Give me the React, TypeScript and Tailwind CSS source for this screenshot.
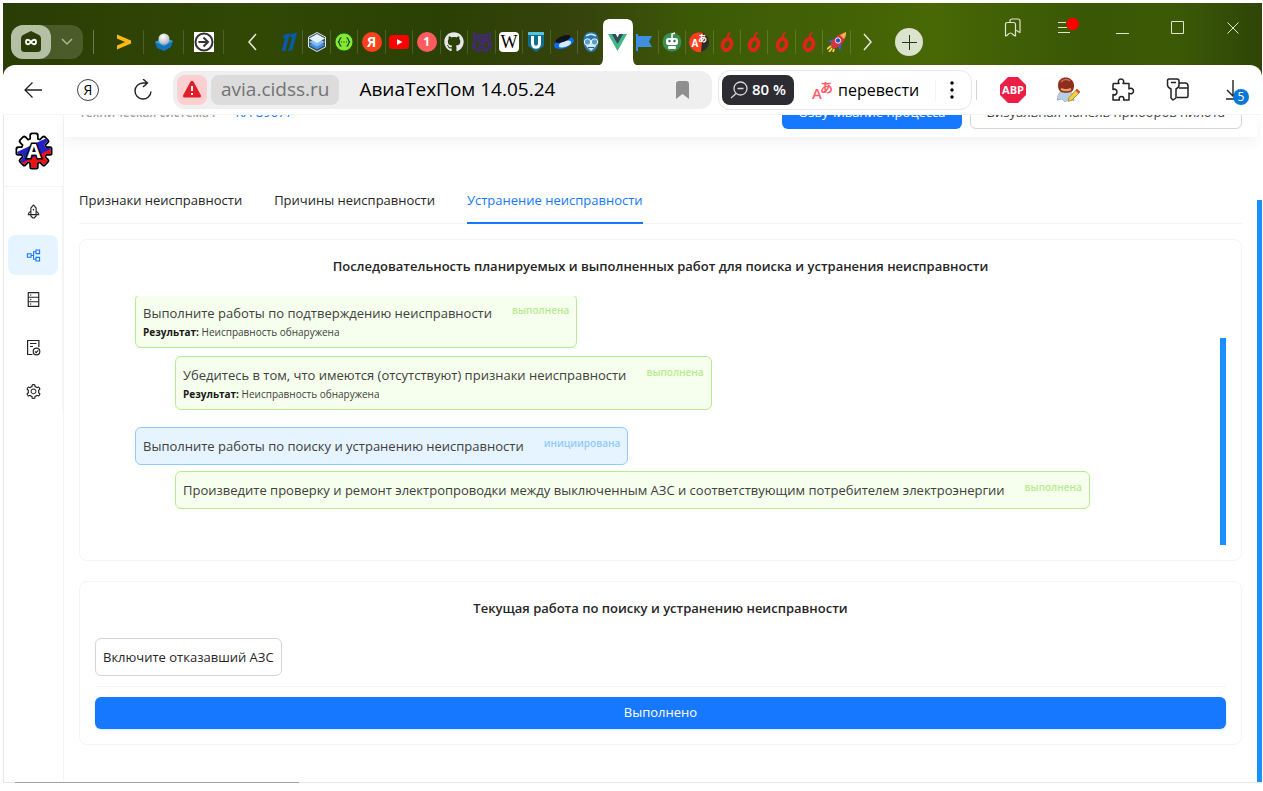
import { ReactNode } from "react";
import clsx from "clsx";
import {
  AiOutlineDatabase,
  AiOutlinePartition,
  AiOutlineRocket,
  AiOutlineSetting,
} from "react-icons/ai";
import { FaGithub } from "react-icons/fa";

/* ---------- TAB FAVICONS ---------- */

const ArrowYellow = () => (
  <svg width="16" height="18" viewBox="0 0 16 18">
    <path d="M1 1.500v4L9 9l-8 3.500v4L15 10.500v-3z" fill="#fdb813" />
  </svg>
);

const Sphere = () => (
  <svg width="20" height="20" viewBox="0 0 20 20">
    <defs>
      <radialGradient id="ball" cx=".4" cy=".3" r=".8">
        <stop offset="0" stopColor="#fff" />
        <stop offset="1" stopColor="#a9a9b5" />
      </radialGradient>
    </defs>
    <path d="M1 10l9-4 9 3-2 6-7 4-7-3z" fill="#1474b8" />
    <path d="M1 10l9-4 9 3-9 5z" fill="#3aa0d8" />
    <circle cx="10" cy="7" r="5.500" fill="url(#ball)" />
  </svg>
);

const CircleArrow = () => (
  <svg width="20" height="20" viewBox="0 0 20 20">
    <path d="M0 0h20v20H0z" fill="#fff" />
    <circle cx="10" cy="10" r="8.500" fill="none" stroke="#333" strokeWidth="2" />
    <path d="M4.500 10H14M9.500 5.500L14 10l-4.500 4.500" fill="none" stroke="#333" strokeWidth="2" />
  </svg>
);

const ChannelOne = () => (
  <svg width="16" height="20" viewBox="0 0 16 20">
    <path d="M3 3l6-2-4.500 18H.5L4 6H1.500z" fill="#0b5aa5" />
    <path d="M9.500 2L16 .5 11.500 18l-4 1L11 5H8.500z" fill="#0b5aa5" />
  </svg>
);

const Layers = () => (
  <svg width="20" height="20" viewBox="0 0 20 20">
    <path d="M10 .5l8.500 4.500v10L10 19.500 1.500 15V5z" fill="#3c4a5c" stroke="#dfe8f0" />
    <path d="M10 9l8 4-8 4.500L2 13z" fill="#3f8fe0" />
    <path d="M10 6l8 4-8 4.500L2 10z" fill="#7dbdf2" />
    <path d="M10 2l8 4.500-8 4.500-8-4.500z" fill="#e3f3fd" />
  </svg>
);

const Swagger = () => (
  <svg width="20" height="20" viewBox="0 0 20 20">
    <circle cx="10" cy="10" r="9" fill="#85ea2d" stroke="#235b20" strokeWidth="1" />
    <path
      d="M7.500 6C5 5.500 6.500 9.500 4 10c2.500.5 1 4.500 3.500 4M12.500 6c2.500-.5 1 3.500 3.500 4-2.500.5-1 4.500-3.500 4M7 10h1M9.500 10h1M12 10h1"
      fill="none"
      stroke="#173647"
      strokeWidth="1.200"
    />
  </svg>
);

const Round = ({ className, children }: { className: string; children: ReactNode }) => (
  <span
    className={clsx(
      "flex h-5 w-5 items-center justify-center rounded-full font-bold leading-5 text-white",
      className
    )}
  >
    {children}
  </span>
);

const Youtube = () => (
  <svg width="20" height="14" viewBox="0 0 20 14">
    <rect width="20" height="14" rx="3.500" fill="#f00" />
    <path d="M8 4l5.500 3L8 10z" fill="#fff" />
  </svg>
);

const Owl = () => (
  <svg width="20" height="20" viewBox="0 0 20 20" fill="none" stroke="#4b2296" strokeWidth="1.300">
    <path d="M2 1l3 2.500h10L18 1v5l-1 4v4l-2 4H5l-2-4v-4L2 6z" />
    <circle cx="6.500" cy="7" r="2.200" />
    <circle cx="13.500" cy="7" r="2.200" />
    <path d="M9 9l1 2 1-2M6 12h8M7 15h6M6 7h1M13 7h1M3 13l-2-2v5l2 1M17 13l2-2v5l-2 1M5 19h3M12 19h3" />
  </svg>
);

const ShieldU = () => (
  <svg width="16" height="20" viewBox="0 0 16 20">
    <path d="M0 0h16v14l-8 6-8-6z" fill="#106f91" />
    <path d="M0 0h16v3H0z" fill="#55c3d8" />
    <path d="M4.500 4v7.500c0 5 7 5 7 0V4" fill="none" stroke="#fff" strokeWidth="3" />
  </svg>
);

const Disk = () => (
  <svg width="20" height="14" viewBox="0 0 20 14" className="overflow-visible">
    <ellipse cx="10" cy="8" rx="10.500" ry="5" transform="rotate(-20 10 8)" fill="#0d6bf0" />
    <ellipse cx="11" cy="9" rx="6.500" ry="3" transform="rotate(-20 11 9)" fill="#cfe9ff" />
    <ellipse cx="9" cy="4" rx="8" ry="3" transform="rotate(-20 9 4)" fill="#10131c" />
  </svg>
);

const Face = () => (
  <svg width="20" height="20" viewBox="0 0 20 20">
    <path d="M10 0c5 0 7.500 3 7.500 8.500S15 20 10 20 2.500 14 2.500 8.500 5 0 10 0z" fill="#2c79ad" />
    <path d="M5 8h10v6l-5 5-5-5z" fill="#cfe6f3" />
    <path d="M5 4c3-2 7-2 10 0" stroke="#d8ecf7" strokeWidth="1.500" fill="none" />
    <circle cx="6.500" cy="10" r="3.200" fill="#5b9fc8" stroke="#eaf5fb" />
    <circle cx="13.500" cy="10" r="3.200" fill="#5b9fc8" stroke="#eaf5fb" />
    <path d="M7 15.500h6" stroke="#24618d" />
  </svg>
);

const Vue = () => (
  <svg width="19" height="17" viewBox="0 0 19 17">
    <path d="M0 0h7.500l2 3.500 2-3.500H19L9.500 17z" fill="#41b883" />
    <path d="M3.800 0h3.700l2 3.500 2-3.500h3.700L9.500 10z" fill="#35495e" />
  </svg>
);

const Flag = () => (
  <svg width="16" height="17" viewBox="0 0 16 17">
    <path d="M0 0h2v2h14l-3 5.500 3 5.500H2v4H0z" fill="#3f8fe0" />
  </svg>
);

const Robot = () => (
  <svg width="20" height="20" viewBox="0 0 20 20">
    <circle cx="10" cy="10" r="9.500" fill="#3c8d50" />
    <path d="M10 6V2l3-1" stroke="#fff" strokeWidth="1.500" fill="none" />
    <rect x="4" y="6" width="12" height="7" rx="2.500" fill="#fff" />
    <rect x="6" y="14" width="8" height="3" rx="1" fill="#fff" />
    <circle cx="7.500" cy="9" r="1.200" fill="#2a6b3b" />
    <circle cx="12.500" cy="9" r="1.200" fill="#2a6b3b" />
  </svg>
);

const TranslateDot = () => (
  <svg width="20" height="20" viewBox="0 0 20 20" fontFamily="'Open Sans', 'Noto Sans CJK JP', sans-serif">
    <circle cx="10" cy="10" r="10" fill="#2b2b2e" />
    <path d="M14 1A10 10 0 1 0 12 20z" fill="#fc3f1d" />
    <text x="2.500" y="15" fontSize="10" fontWeight="700" fill="#fff">A</text>
    <text x="9" y="10" fontSize="9" fontWeight="700" fill="#fff">あ</text>
  </svg>
);

const Berry = () => (
  <svg width="16" height="20" viewBox="0 0 16 20">
    <path d="M9 5.500C8.500 3.500 9.500 1.500 11.500.5" stroke="#e2231a" strokeWidth="1.800" fill="none" />
    <ellipse
      cx="8"
      cy="12.500"
      rx="4.200"
      ry="5.800"
      transform="rotate(20 8 12.500)"
      fill="none"
      stroke="#e2231a"
      strokeWidth="3.800"
    />
  </svg>
);

const RocketColor = () => (
  <svg width="20" height="20" viewBox="0 0 20 20">
    <path d="M1 9l6-2-1 5zM13 19l-3-6 5-2z" fill="#3c5fd6" />
    <path d="M3 14c2-6 7-12 16-14 0 8-4 13-12 17z" fill="#d8353a" />
    <path d="M13 3l6-3c0 3 0 4-2 7z" fill="#f3b64a" />
    <circle cx="11" cy="8.500" r="2.700" fill="#2f4fc4" stroke="#e8ecff" />
    <path d="M4 14l-4 3M5 16l-3 4M7 17l-1 3" stroke="#f5d442" strokeWidth="1.800" />
  </svg>
);

const Chevron = ({ d }: { d: string }) => (
  <svg width="18" height="18" viewBox="0 0 18 18" fill="none" stroke="#e6ead9" strokeWidth="1.500">
    <path d={d} />
  </svg>
);

const pinned = [
  { name: "pin-1", icon: <ArrowYellow /> },
  { name: "pin-2", icon: <Sphere /> },
  { name: "pin-3", icon: <CircleArrow /> },
];

const tabs: { id: number; icon: ReactNode; active?: boolean }[] = [
  { id: 1, icon: <ChannelOne /> },
  { id: 2, icon: <Layers /> },
  { id: 3, icon: <Swagger /> },
  { id: 4, icon: <Round className="bg-[#fc3f1d] text-sm">Я</Round> },
  { id: 5, icon: <Youtube /> },
  { id: 6, icon: <Round className="bg-[#ff5c60] text-xs">1</Round> },
  { id: 7, icon: <FaGithub className="h-5 w-5 text-gray-200" /> },
  { id: 8, icon: <Owl /> },
  {
    id: 9,
    icon: (
      <span className="flex h-5 w-5 items-center justify-center rounded bg-white font-['Liberation_Serif',serif] text-lg leading-5 text-black">
        W
      </span>
    ),
  },
  { id: 10, icon: <ShieldU /> },
  { id: 11, icon: <Disk /> },
  { id: 12, icon: <Face /> },
  { id: 13, icon: <Vue />, active: true },
  { id: 14, icon: <Flag /> },
  { id: 15, icon: <Robot /> },
  { id: 16, icon: <TranslateDot /> },
  { id: 17, icon: <Berry /> },
  { id: 18, icon: <Berry /> },
  { id: 19, icon: <Berry /> },
  { id: 20, icon: <Berry /> },
  { id: 21, icon: <RocketColor /> },
];

/* ---------- BROWSER CHROME ---------- */

const WindowControls = () => (
  <div className="flex h-[50px] pr-0.5 text-[#dfe5cf]">
    <button className="flex w-[55px] items-center justify-center">
      <svg width="18" height="20" viewBox="0 0 18 20" fill="none" stroke="currentColor" strokeWidth="1.200">
        <path d="M1.500 6.500c0-1.500.5-2 2-2h6c1.500 0 2 .5 2 2V18c-2 0-3-3-5-3s-3 3-5 3z" />
        <path d="M6 4V3c0-1.500 1-2 2-2h6c1.500 0 2 1 2 2v11.500c-1.500 0-2-2-4-2" />
      </svg>
    </button>
    <button className="flex w-[55px] items-center justify-center">
      <svg width="22" height="20" viewBox="0 0 22 20">
        <path d="M1 4.500h8M1 9.500h9M1 14.500h12" stroke="currentColor" />
        <circle cx="15.500" cy="6" r="6.200" fill="#f00" />
      </svg>
    </button>
    <button className="flex w-[55px] items-center justify-center">
      <svg width="14" height="14" viewBox="0 0 14 14">
        <path d="M0 12.500h13" stroke="currentColor" />
      </svg>
    </button>
    <button className="flex w-[55px] items-center justify-center">
      <svg width="14" height="14" viewBox="0 0 14 14">
        <path d="M.5.5h12v12H.5z" fill="none" stroke="currentColor" />
      </svg>
    </button>
    <button className="flex w-[55px] items-center justify-center">
      <svg width="12" height="12" viewBox="0 0 12 12">
        <path d="M.5.5l11 11M11.500.5l-11 11" stroke="currentColor" />
      </svg>
    </button>
  </div>
);

const TabStrip = () => (
  <div className="flex h-[62px] justify-between">
    <div className="flex items-center pl-2 pt-4">
      {/* HOME PILL */}
      <div className="flex h-[34px] w-[72px] rounded-xl bg-white/15">
        <button className="flex w-10 items-center justify-center rounded-xl bg-[#b5bfa4]">
          <svg width="22" height="22" viewBox="0 0 22 22">
            <path d="M11 0l8 4c1.500 1 2 2 2 4v9c0 3-1 4-4 4H5c-3 0-4-1-4-4V8c0-2 .5-3 2-4z" fill="#2a3d08" />
            <path
              d="M11 11c-2-3-5-3-5 0s3 3 5 0 5-3 5 0-3 3-5 0z"
              fill="none"
              stroke="#fff"
              strokeWidth="1.800"
            />
          </svg>
        </button>
        <button className="flex flex-1 items-center justify-center">
          <svg width="12" height="8" viewBox="0 0 12 8" fill="none" stroke="#aab596" strokeWidth="1.500">
            <path d="M1 1l5 5 5-5" />
          </svg>
        </button>
      </div>
      <div className="ml-2.5 mr-2.5 h-6 w-px bg-white/30" />
      {pinned.map((p) => (
        <button
          key={p.name}
          className="flex h-6 w-10 items-center justify-center border-r border-white/15"
        >
          {p.icon}
        </button>
      ))}
      <button className="ml-5 mr-3.5 flex w-[18px] justify-center">
        <Chevron d="M12 1L5 9l7 8" />
      </button>
      {/* OPEN TABS */}
      <div className="flex w-[575px]">
        {tabs.map((t) => (
          <button
            key={t.id}
            className={clsx(
              "relative flex h-6 flex-1 items-center justify-center",
              !t.active && t.id !== 12 && "border-r border-white/15"
            )}
          >
            {t.active && (
              <svg
                className="absolute -top-[11px] left-1/2 max-w-none -translate-x-1/2"
                width="46"
                height="47"
                viewBox="0 0 46 47"
              >
                <path d="M0 47c6 0 8-3 8-8V8c0-6 2-8 8-8h14c6 0 8 2 8 8v31c0 5 2 8 8 8z" fill="#fff" />
              </svg>
            )}
            <span className="relative">{t.icon}</span>
          </button>
        ))}
      </div>
      <button className="ml-1 flex w-6 justify-center">
        <Chevron d="M6 1l7 8-7 8" />
      </button>
      <button className="ml-4 flex h-7 w-7 items-center justify-center rounded-full bg-[#dbe2cd]">
        <svg width="15" height="15" viewBox="0 0 15 15" stroke="#2a3310">
          <path d="M7.500 0v15M0 7.500h15" />
        </svg>
      </button>
    </div>
    <WindowControls />
  </div>
);

const AddressBar = () => (
  <div className="relative z-10 flex h-[50px] items-center rounded-t-xl border-b border-gray-100 bg-white pr-0.5 text-black">
    <button className="flex w-[60px] justify-center">
      <svg width="18" height="18" viewBox="0 0 18 18" fill="none" stroke="#222" strokeWidth="1.300">
        <path d="M8.500 1.500L1 9l7.500 7.500M1 9h17" />
      </svg>
    </button>
    <button className="flex w-[50px] justify-center">
      <span className="flex h-[22px] w-[22px] items-center justify-center rounded-full border border-neutral-700 text-sm leading-5">
        Я
      </span>
    </button>
    <button className="flex w-[60px] justify-center">
      <svg width="20" height="22" viewBox="0 0 20 22" fill="none" stroke="#222" strokeWidth="1.400">
        <path d="M18 12.500a8 8 0 1 1-8-8.500h4M10 0l4.500 4L10 8" />
      </svg>
    </button>

    {/* URL */}
    <div className="flex h-[38px] flex-1 items-center rounded-xl bg-[#efefef] px-1 text-[19px]">
      <span className="flex h-[30px] w-[30px] items-center justify-center rounded-lg bg-[#fccfd1]">
        <svg width="18" height="17" viewBox="0 0 18 17">
          <path d="M9 0c1 0 1.500.5 2 1.500l6.500 12c1 2 .5 3-1.500 3H2c-2 0-2.500-1-1.500-3l6.500-12C7.500.5 8 0 9 0z" fill="#e01f2d" />
          <path d="M9 5v5M9 12v2" stroke="#fff" strokeWidth="2" />
        </svg>
      </span>
      <span className="ml-1 flex h-[30px] items-center rounded-lg bg-[#dcdcdc] px-2.5 text-neutral-500">
        avia.cidss.ru
      </span>
      <span className="ml-5 flex-1 whitespace-nowrap text-black">АвиаТехПом 14.05.24</span>
      <svg className="mr-[19px]" width="13" height="18" viewBox="0 0 13 18">
        <path d="M0 18V3c0-2 1-3 3-3h7c2 0 3 1 3 3v15l-6.500-5z" fill="#8f8f8f" />
      </svg>
    </div>

    {/* ZOOM / TRANSLATE */}
    <div className="ml-1.5 flex h-10 w-[254px] items-center rounded-xl border border-gray-200 px-[3px] text-base">
      <button className="flex h-[30px] w-[72px] items-center justify-center gap-1 rounded-lg bg-[#2d2c33] text-white">
        <svg width="18" height="18" viewBox="0 0 18 18" fill="none" stroke="#d8d8d8" strokeWidth="1.300">
          <circle cx="10.500" cy="7.500" r="6.500" />
          <path d="M6 12.500L1 17M7.500 7.500h6" />
        </svg>
        <span className="whitespace-nowrap text-[15px] font-semibold">80 %</span>
      </button>
      <button className="ml-[18px] flex items-center gap-1.5">
        <svg
          className="overflow-visible"
          width="20"
          height="22"
          viewBox="0 0 20 22"
          fill="#ff5d6c"
          fontFamily="'Open Sans', 'Noto Sans CJK JP', sans-serif"
        >
          <text x="0" y="20" fontSize="15" fontWeight="600">A</text>
          <text x="8" y="13" fontSize="13" fontWeight="700">あ</text>
        </svg>
        <span>перевести</span>
      </button>
      <div className="ml-auto h-[22px] w-px bg-gray-100" />
      <button className="flex w-8 justify-center">
        <svg width="4" height="18" viewBox="0 0 4 18">
          <circle cx="2" cy="2" r="1.700" />
          <circle cx="2" cy="9" r="1.700" />
          <circle cx="2" cy="16" r="1.700" />
        </svg>
      </button>
    </div>
    <div className="ml-1 mr-2 h-5 w-px bg-gray-300" />

    {/* EXTENSIONS */}
    <div className="flex">
      <button className="flex w-[55px] items-center justify-center">
        <svg width="26" height="26" viewBox="0 0 26 26" fontFamily="'Open Sans', sans-serif">
          <path d="M8 0h10l8 8v10l-8 8H8l-8-8V8z" fill="#ed1e45" />
          <text x="13" y="17" fontSize="11" fontWeight="700" fill="#fff" textAnchor="middle">ABP</text>
        </svg>
      </button>
      <button className="flex w-[55px] items-center justify-center">
        <svg width="26" height="26" viewBox="0 0 26 26">
          <path d="M5 15l8-2 5 4 1 7-5-2-4 3-3-3-5 1c1-4 1-5 3-8z" fill="#b9cfe8" stroke="#8099b8" strokeWidth=".6" />
          <path d="M5 9h13v4c-3 4-9 4-12 0z" fill="#e3a86f" />
          <path d="M3 8c0-10 15-10 16 0 0 4-1 6-3 7-3 1-8 1-10 0-2-1-3-4-3-7z" fill="#8f2d1c" />
          <path d="M6 12c3 1.500 7 1.500 10 0" stroke="#e3a86f" strokeWidth="2" fill="none" />
          <path d="M6 5c2-3 7-3 9-1" stroke="#d5705a" strokeWidth="1.500" fill="none" />
          <path d="M22 12l3 3-8 8-4 1.500 1-4z" fill="#f6cf3c" stroke="#98761a" strokeWidth=".7" />
          <path d="M22 12l3 3-1.500 1.500-3-3z" fill="#d8474d" />
        </svg>
      </button>
      <button className="flex w-[55px] items-center justify-center">
        <svg width="24" height="24" viewBox="0 0 24 24" fill="none" stroke="#222" strokeWidth="1.500" strokeLinejoin="round">
          <path d="M3 5.500h5c-1.500-2-.5-4.500 2-4.500s3.500 2.500 2 4.500h6v5.500c2-1.500 4.500-.5 4.500 2s-2.500 3.500-4.500 2V22h-5.500c1-2-.2-3.500-2-3.500S7.500 20 8.500 22H2v-5.500c2 1 4-.2 4-2.500s-2-3.500-4-2.500v-5c0-.6.4-1 1-1z" />
        </svg>
      </button>
      <button className="flex w-[55px] items-center justify-center">
        <svg width="24" height="24" viewBox="0 0 24 24" fill="none" stroke="#222" strokeWidth="1.500" strokeLinejoin="round">
          <path d="M3 1h8c1.500 0 2 1 2 2v4c0 2-1 3-3 4v9l-3 2-2-2v-9C3 10 1.500 9 1.500 7V3c0-1 .5-2 1.500-2zM5 4.500h5" />
          <path d="M13 5h6c2 0 3 1 3 3v10c0 1-.5 1.500-1.500 1.500H11M13 10h9" />
        </svg>
      </button>
      <button className="relative flex w-[55px] items-center justify-center">
        <svg width="18" height="22" viewBox="0 0 18 22" fill="none" stroke="#222" strokeWidth="1.400">
          <path d="M9 1v16M3 11l6 6 6-6M2 20h8" />
        </svg>
        <span className="absolute left-7 top-3 flex h-4 w-4 items-center justify-center rounded-full bg-[#0a78d6] text-xs leading-4 text-white">
          5
        </span>
      </button>
    </div>
  </div>
);

/* ---------- SIDEBAR ---------- */

const teeth = [0, 45, 90, 135, 180, 225, 270, 315];

const GearLogo = () => (
  <svg width="38" height="38" viewBox="0 0 38 38">
    <defs>
      <clipPath id="gear">
        <circle cx="19" cy="19" r="12" />
        {teeth.map((a) => (
          <rect key={a} x="16" y="2.200" width="6" height="8" rx="1.500" transform={`rotate(${a} 19 19)`} />
        ))}
      </clipPath>
    </defs>
    <circle cx="19" cy="19" r="13.500" />
    {teeth.map((a) => (
      <rect key={a} x="14.300" y=".5" width="9.400" height="10" rx="2.500" transform={`rotate(${a} 19 19)`} />
    ))}
    <g clipPath="url(#gear)">
      <path d="M0 0h38v38H0z" fill="#fff" />
      <path d="M0 21L38 3v35H0z" fill="#2222c4" />
      <path d="M0 34l38-18v22H0z" fill="#f01010" />
    </g>
    <text
      x="19"
      y="26"
      textAnchor="middle"
      fontFamily="'Open Sans', sans-serif"
      fontSize="20"
      fontWeight="700"
      fill="#fff"
      stroke="#000"
      strokeWidth="3"
      paintOrder="stroke"
    >
      A
    </text>
  </svg>
);

const ReportIcon = () => (
  <svg width="17" height="17" viewBox="0 0 17 17" fill="none" stroke="currentColor" strokeWidth="1.200">
    <path d="M7.500 15.500H2.600V1.500h11.300V8M5 4.500h6.500M5 7.500h3" />
    <circle cx="11.500" cy="12.500" r="3.300" />
    <path d="M10 12.500l1.200 1.200 2-2.400" />
  </svg>
);

const menu = [
  { label: "Запуск", icon: <AiOutlineRocket /> },
  { label: "Процесс", icon: <AiOutlinePartition />, active: true },
  { label: "База данных", icon: <AiOutlineDatabase /> },
];

const menuBottom = [
  { label: "Отчёты", icon: <ReportIcon /> },
  { label: "Настройки", icon: <AiOutlineSetting /> },
];

const MenuLink = ({ label, icon, active }: { label: string; icon: ReactNode; active?: boolean }) => (
  <a
    href="#"
    aria-label={label}
    className={clsx(
      "flex h-10 items-center justify-center rounded-lg text-[17px]",
      active ? "bg-[#e6f4ff] text-[#1677ff]" : "text-neutral-800"
    )}
  >
    {icon}
  </a>
);

const Sidebar = () => (
  <aside className="w-[60px] shrink-0 border-r border-gray-100">
    <div className="flex h-[72px] items-center justify-center border-b border-gray-100">
      <GearLogo />
    </div>
    <nav className="flex flex-col gap-1 border-r border-gray-100 px-1 pt-1">
      {menu.map((m) => (
        <MenuLink key={m.label} {...m} />
      ))}
      <div className="mt-1 flex flex-col gap-1">
        {menuBottom.map((m) => (
          <MenuLink key={m.label} {...m} />
        ))}
      </div>
    </nav>
  </aside>
);

/* ---------- CONTENT ---------- */

type WorkProps = {
  title: string;
  status: string;
  result?: string;
  started?: boolean;
};

const Work = ({ title, status, result, started }: WorkProps) => (
  <div
    className={clsx(
      "flex w-fit items-start gap-5 rounded-md border p-[7px]",
      started ? "border-[#91caff] bg-[#e6f4ff]" : "border-[#b7eb8f] bg-[#f6ffed]"
    )}
  >
    <div className="text-neutral-700">
      <p className="whitespace-nowrap text-[13px] leading-[22px]">{title}</p>
      {result && (
        <p className="text-[10px] leading-4">
          <b className="text-neutral-900">Результат:</b> {result}
        </p>
      )}
    </div>
    <span
      className={clsx(
        "text-[10px] font-semibold leading-4",
        started ? "text-[#91caff]" : "text-[#b7eb8f]"
      )}
    >
      {status}
    </span>
  </div>
);

const Card = ({ title, children }: { title: string; children: ReactNode }) => (
  <section className="rounded-lg border border-gray-100 px-[15px] pb-[15px]">
    <h2 className="flex h-14 items-center justify-center pb-0.5 text-[13px] font-semibold text-neutral-800">
      {title}
    </h2>
    {children}
  </section>
);

const tabItems = ["Признаки неисправности", "Причины неисправности", "Устранение неисправности"];

const Content = () => (
  <main className="min-w-0 flex-1">
    {/* PAGE HEADER, scrolled under the toolbar */}
    <header className="flex h-[22px] items-end justify-between overflow-hidden pb-2 pl-[15px] pr-[15px] text-[13px] shadow-[0_6px_14px_rgba(0,0,0,0.05)]">
      <div className="flex h-8 shrink-0 items-center gap-5">
        <span className="text-xs font-semibold text-neutral-400">Техническая система :</span>
        <a href="#" className="text-[#1677ff]">RA-89077</a>
      </div>
      <div className="flex shrink-0 gap-2">
        <button className="h-8 rounded-md bg-[#1677ff] px-4 text-white">
          Озвучивание процесса
        </button>
        <button className="h-8 rounded-md border border-gray-300 px-4 text-neutral-700">
          Визуальная панель приборов пилота
        </button>
      </div>
    </header>

    <div className="px-[15px] pt-[42px]">
      {/* TABS */}
      <div role="tablist" className="flex gap-8 border-b border-gray-100 text-[13px]">
        {tabItems.map((t, i) => (
          <button
            key={t}
            role="tab"
            aria-selected={i === 2}
            className={clsx(
              "-mb-px h-[45px] border-b-2",
              i === 2 ? "border-[#1677ff] text-[#1677ff]" : "border-transparent text-neutral-800"
            )}
          >
            {t}
          </button>
        ))}
      </div>

      <div className="flex flex-col gap-5 pt-[15px]">
        <Card title="Последовательность планируемых и выполненных работ для поиска и устранения неисправности">
          <div className="flex h-[249px]">
            <div className="flex flex-1 flex-col gap-[17px] overflow-hidden pl-10">
              <div className="-mt-0.5 flex flex-col gap-2">
                <Work
                  title="Выполните работы по подтверждению неисправности"
                  status="выполнена"
                  result="Неисправность обнаружена"
                />
                <div className="pl-10">
                  <Work
                    title="Убедитесь в том, что имеются (отсутствуют) признаки неисправности"
                    status="выполнена"
                    result="Неисправность обнаружена"
                  />
                </div>
              </div>
              <div className="flex flex-col gap-1.5">
                <Work
                  title="Выполните работы по поиску и устранению неисправности"
                  status="инициирована"
                  started
                />
                <div className="pl-10">
                  <Work
                    title="Произведите проверку и ремонт электропроводки между выключенным АЗС и соответствующим потребителем электроэнергии"
                    status="выполнена"
                  />
                </div>
              </div>
            </div>
            <div className="h-[207px] w-1.5 self-end bg-[#1890ff]" />
          </div>
        </Card>

        <Card title="Текущая работа по поиску и устранению неисправности">
          <div className="w-fit rounded-md border border-gray-300 p-[7px] text-[13px] leading-[22px] text-neutral-800">
            Включите отказавший АЗС
          </div>
          <hr className="my-2.5 border-gray-100" />
          <button className="h-8 w-full rounded-md bg-[#1677ff] text-[13px] text-white shadow-sm shadow-blue-100">
            Выполнено
          </button>
        </Card>
      </div>
    </div>
  </main>
);

const App = () => {
  return (
    <div className="flex h-screen flex-col bg-white pb-2 pl-[3px] pr-px pt-[3px] font-['Open_Sans','Noto_Sans',sans-serif]">
      <div className="shrink-0 bg-[linear-gradient(90deg,#2a3d05_0%,#314805_20%,#2b4005_35%,#37430c_46%,#3c5a06_55%,#486705_74%,#3a5706_86%,#3c5a06_93%,#2e4507_100%)]">
        <TabStrip />
        <AddressBar />
      </div>
      <div className="flex min-h-0 flex-1 overflow-hidden border-b border-l border-gray-200">
        <Sidebar />
        <Content />
        <div className="mt-[85px] w-[5px] shrink-0 bg-[#1890ff]" />
      </div>
      <div className="-mt-px ml-3 h-px w-[284px] shrink-0 bg-neutral-400" />
    </div>
  );
};

export default App;
